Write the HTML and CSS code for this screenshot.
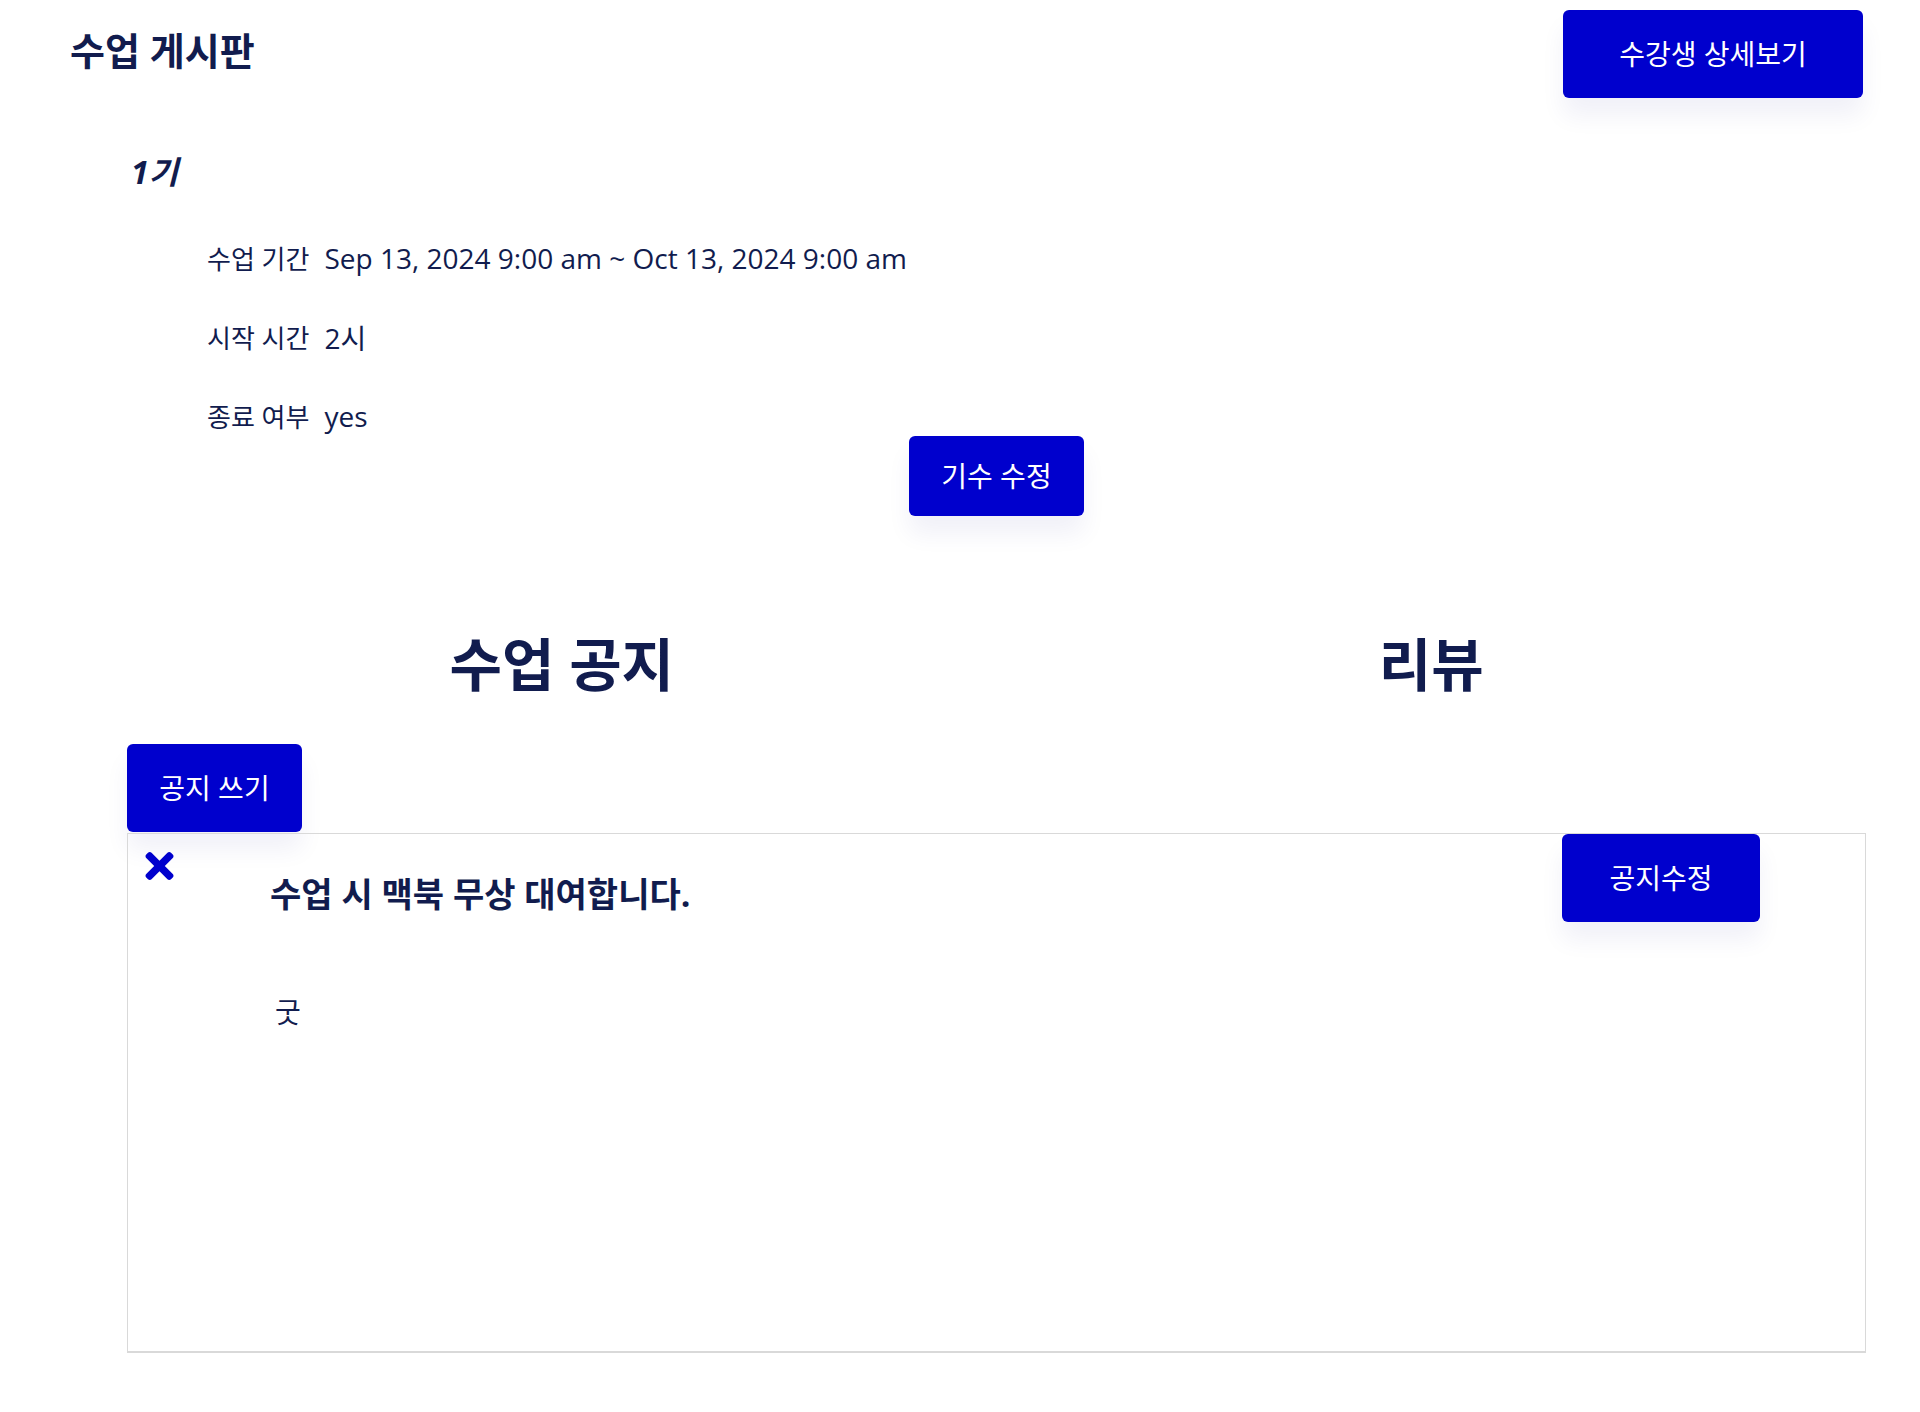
FILE: index.html
```html
<!DOCTYPE html>
<html lang="ko">
<head>
<meta charset="utf-8">
<title>수업 게시판</title>
<link rel="stylesheet" href="styles.css">
</head>
<body>
<header class="top">
  <h1 class="page-title">수업 게시판</h1>
  <button class="btn btn-students">수강생 상세보기</button>
</header>
<main class="content">
  <section class="cohort">
    <h2 class="cohort-name">1기</h2>
    <dl class="info">
      <div class="info-row"><dt>수업 기간</dt><dd>Sep 13, 2024 9:00 am ~ Oct 13, 2024 9:00 am</dd></div>
      <div class="info-row"><dt>시작 시간</dt><dd>2시</dd></div>
      <div class="info-row"><dt>종료 여부</dt><dd>yes</dd></div>
    </dl>
    <div class="cohort-actions">
      <button class="btn btn-small">기수 수정</button>
    </div>
  </section>
  <section class="boards">
    <div class="tabs">
      <h2 class="tab-title">수업 공지</h2>
      <h2 class="tab-title">리뷰</h2>
    </div>
    <button class="btn btn-write">공지 쓰기</button>
    <article class="notice">
      <button class="notice-close" aria-label="삭제">
        <svg viewBox="0 80 352 352" width="29" height="28" aria-hidden="true"><path fill="currentColor" d="M242.72 256l100.07-100.07c12.28-12.28 12.28-32.19 0-44.48l-22.24-22.24c-12.28-12.28-32.19-12.28-44.48 0L176 189.28 75.930 89.21c-12.28-12.28-32.19-12.28-44.48 0L9.21 111.45c-12.28 12.28-12.28 32.19 0 44.48L109.28 256 9.21 356.07c-12.28 12.28-12.28 32.19 0 44.48l22.24 22.24c12.280 12.28 32.2 12.28 44.48 0L176 322.72l100.07 100.07c12.28 12.28 32.2 12.28 44.48 0l22.24-22.24c12.28-12.28 12.28-32.19 0-44.48L242.72 256z"/></svg>
      </button>
      <div class="notice-head">
        <h3 class="notice-title">수업 시 맥북 무상 대여합니다.</h3>
        <button class="btn btn-edit">공지수정</button>
      </div>
      <p class="notice-body">굿</p>
    </article>
  </section>
</main>
</body>
</html>
```
FILE: styles.css
```css
* {
  box-sizing: border-box;
}

body {
  margin: 0;
  background: #ffffff;
  color: #111c4e;
  font-family: "Open Sans", "Noto Sans CJK KR", sans-serif;
}

.btn {
  display: inline-flex;
  align-items: center;
  justify-content: center;
  height: 88px;
  padding: 0;
  border: 0;
  border-radius: 6px;
  background: #0000cd;
  color: #ffffff;
  font-family: inherit;
  font-size: 28px;
  line-height: 1;
  box-shadow: 0 18px 24px rgba(20, 20, 140, 0.06);
  cursor: pointer;
}

.top {
  display: flex;
  justify-content: space-between;
  align-items: flex-start;
  padding: 10px 57px 0 70px;
}

.page-title {
  margin: 0;
  font-size: 38px;
  line-height: 80px;
  font-weight: 700;
}

.btn-students {
  width: 300px;
}

.content {
  padding: 0 54px 0 127px;
}

.cohort-name {
  margin: 54px 0 0 4px;
  font-size: 32px;
  line-height: 40px;
  font-weight: 700;
  font-style: italic;
}

.info {
  display: flex;
  flex-direction: column;
  gap: 43px;
  margin: 48px 0 0 80px;
}

.info-row {
  display: flex;
  align-items: center;
  gap: 15px;
  height: 36px;
}

.info-row dt {
  font-size: 26px;
}

.info-row dd {
  margin: 0;
  font-size: 28px;
}

.cohort-actions {
  display: flex;
  justify-content: center;
  margin-top: 2px;
}

.btn-small {
  width: 175px;
  height: 80px;
}

.tabs {
  display: grid;
  grid-template-columns: 1fr 1fr;
  margin-top: 116px;
}

.tab-title {
  margin: 0;
  font-size: 57px;
  line-height: 64px;
  font-weight: 700;
  text-align: center;
}

.btn-write {
  width: 175px;
  margin-top: 48px;
}

.notice {
  position: relative;
  height: 520px;
  margin-top: 1px;
  border: 1px solid #d9d9d9;
  border-bottom-width: 2px;
}

.notice-close {
  position: absolute;
  left: 17px;
  top: 18px;
  display: flex;
  padding: 0;
  border: 0;
  background: none;
  color: #0000cd;
  cursor: pointer;
}

.notice-head {
  display: flex;
  justify-content: space-between;
  align-items: flex-start;
}

.notice-title {
  margin: 38px 0 0 142px;
  font-size: 34px;
  line-height: 44px;
  font-weight: 700;
}

.btn-edit {
  width: 198px;
  margin-right: 105px;
}

.notice-body {
  margin: 72px 0 0 147px;
  font-size: 28px;
  line-height: 36px;
}
```
